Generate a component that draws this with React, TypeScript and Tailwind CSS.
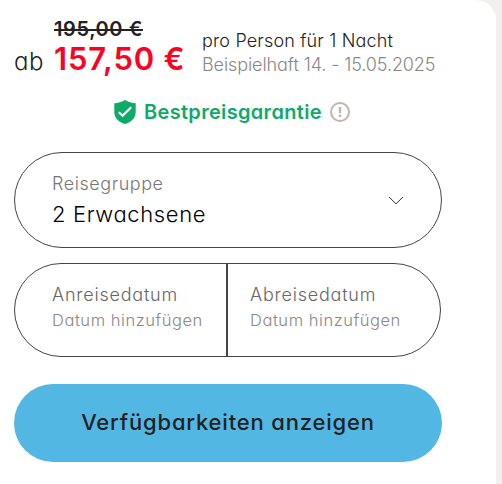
function ShieldIcon() {
  return (
    <svg viewBox="0 0 22 24" className="w-[22px] h-6 shrink-0" fill="none">
      <path d="M11 0 C14 2 18 3 21.700 3.200 V12 C21.700 17.800 17.400 22.400 11 24 C4.600 22.400 0.300 17.800 0.300 12 V3.200 C4 3 8 2 11 0 Z" fill="#0eaa6a" />
      <path d="M4.800 12.200 L8.600 15.800 L17.200 7.200" stroke="#fff" strokeWidth="2.200" />
    </svg>
  );
}

function InfoIcon() {
  return (
    <svg viewBox="0 0 20 20" className="w-5 h-5 shrink-0" fill="none" stroke="#bfb3b3" strokeWidth="2">
      <circle cx="10" cy="10" r="9" />
      <path d="M10 5 V11.200 M10 12.800 V15" strokeWidth="2.400" />
    </svg>
  );
}

function ChevronIcon() {
  return (
    <svg viewBox="0 0 16 9" className="w-4 h-[9px] shrink-0" fill="none" stroke="#333">
      <path d="M1 1 L8 7.800 L15 1" />
    </svg>
  );
}

function DateField({ label }: { label: string }) {
  return (
    <div className="pt-[18px]">
      <div className="h-[25px] leading-[26px] text-[18px] tracking-[0.78px] text-[#666]">{label}</div>
      <div className="h-[26px] leading-[26px] text-[16.500px] tracking-[0.55px] text-[#888]">Datum hinzufügen</div>
    </div>
  );
}

export default function App() {
  return (
    <div className="w-[502px] h-[484px] overflow-hidden bg-[#f1f0ee] font-['Inter',sans-serif] font-light whitespace-nowrap [font-feature-settings:'cv11']">
      <div className="w-[496px] h-full bg-white rounded-tr-[20px] pl-3.5 flex flex-col">

        {/* Price */}
        <div className="flex h-[84px] text-[#222]">
          <div className="w-10 pt-[46px] text-[24px] tracking-[0.5px] leading-8">ab</div>
          <div className="w-[148px] pt-[17px]">
            <div className="w-fit h-6 leading-6 text-[20px] tracking-[0.6px] font-semibold line-through">195,00 €</div>
            <div className="h-9 leading-9 text-[31px] tracking-[0.8px] font-semibold text-[#ff001f]">157,50 €</div>
          </div>
          <div className="pt-[29px] text-[18px] leading-6">
            <div className="tracking-[0.16px]">pro Person für 1 Nacht</div>
            <div className="tracking-[-0.1px] text-[#888]">Beispielhaft 14. - 15.05.2025</div>
          </div>
        </div>

        {/* Guarantee */}
        <div className="flex items-center h-14 pl-[100px]">
          <ShieldIcon />
          <span className="w-[186px] ml-2 text-[20px] tracking-[0.32px] leading-6 font-semibold text-[#0eaa6a]">Bestpreisgarantie</span>
          <InfoIcon />
        </div>

        <button className="mt-3 w-[428px] h-24 border border-[#444] rounded-full flex items-center justify-between pl-[37px] pr-[37px] text-left">
          <span className="block pb-0.5">
            <span className="block h-[30px] leading-[30px] text-[18px] tracking-[0.55px] text-[#777]">Reisegruppe</span>
            <span className="block h-[30px] leading-[30px] text-[22px] tracking-[0.62px] text-black">2 Erwachsene</span>
          </span>
          <ChevronIcon />
        </button>

        {/* Dates */}
        <div className="mt-[15px] w-[427px] h-[94px] border border-[#444] rounded-full flex">
          <div className="w-[213px] pl-[37px] border-r-2 border-[#444]">
            <DateField label="Anreisedatum" />
          </div>
          <div className="pl-[22px]">
            <DateField label="Abreisedatum" />
          </div>
        </div>

        <button className="mt-[27px] w-[428px] h-[78px] rounded-full bg-[#53b7e4] pb-0.5 text-[22px] tracking-[0.82px] font-medium text-[#222]">
          Verfügbarkeiten anzeigen
        </button>
      </div>
    </div>
  );
}
